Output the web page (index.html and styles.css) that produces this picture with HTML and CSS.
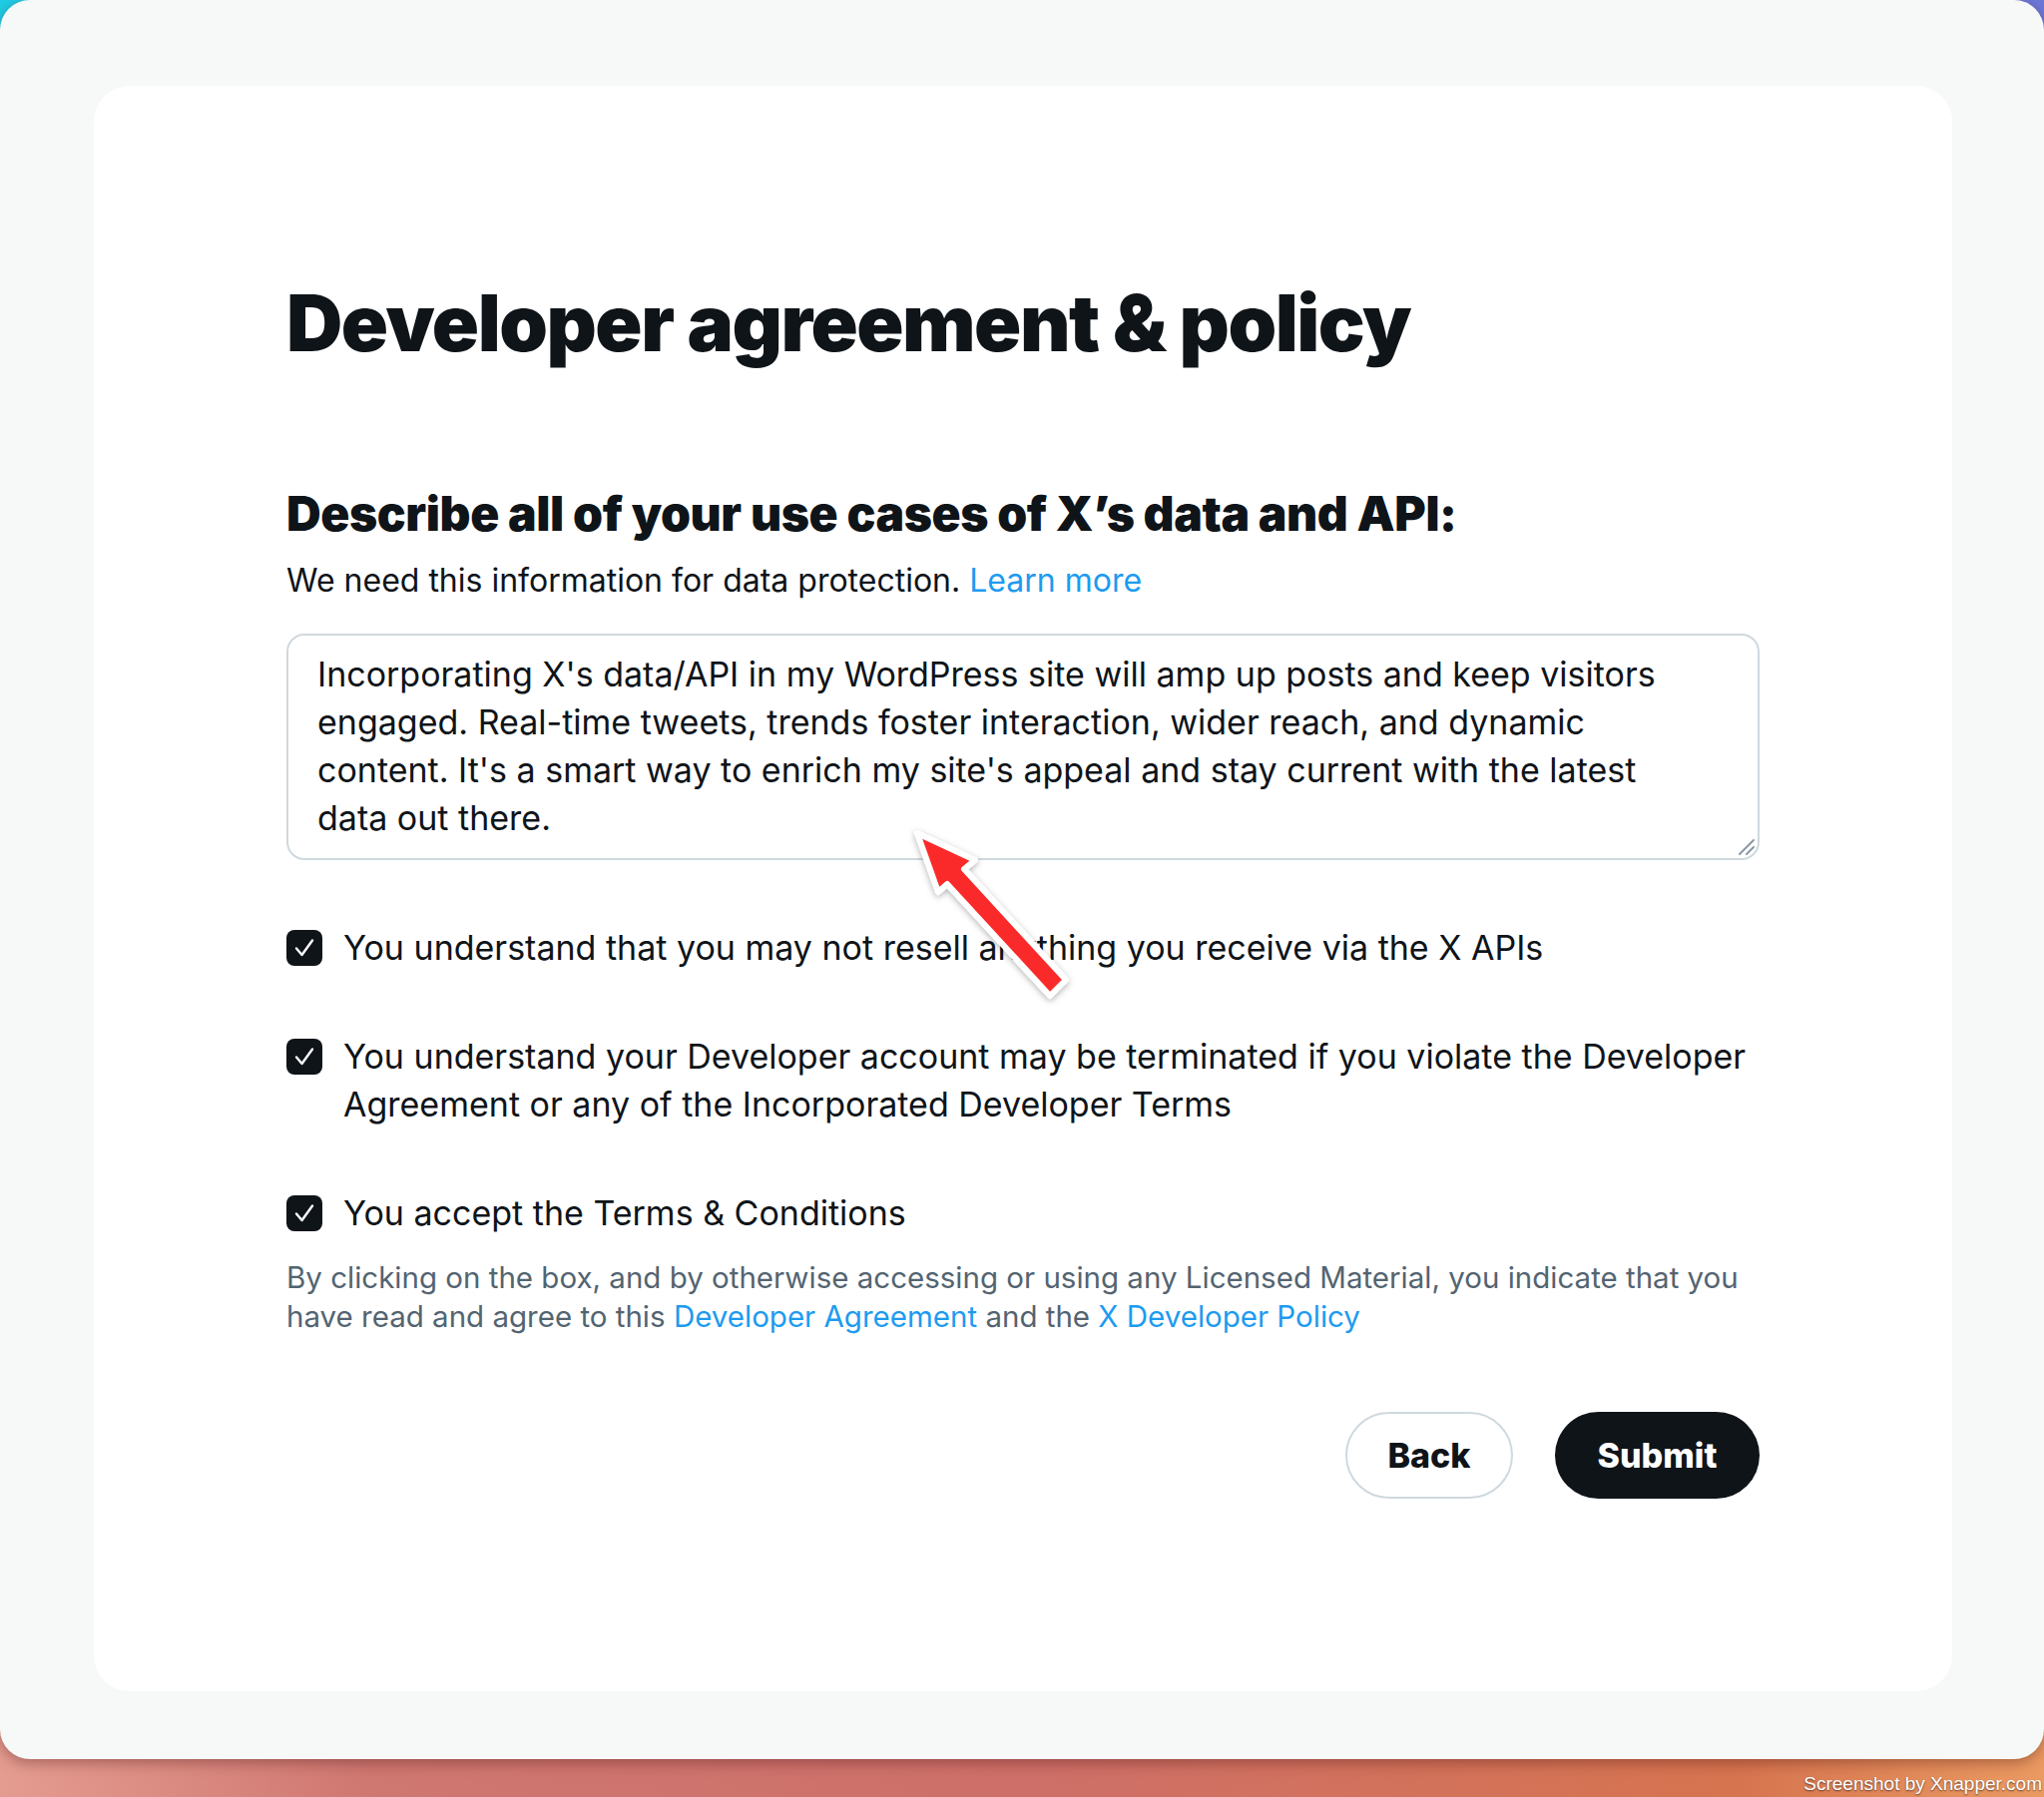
FILE: index.html
```html
<!DOCTYPE html>
<html lang="en">
<head>
<meta charset="utf-8">
<title>Developer agreement &amp; policy</title>
<link rel="stylesheet" href="styles.css">
</head>
<body>
<div class="window">
  <div class="card">
    <h1 class="title">Developer agreement &amp; policy</h1>
    <h2 class="subtitle">Describe all of your use cases of X’s data and API:</h2>
    <p class="hint">We need this information for data protection. <a class="link" href="#">Learn more</a></p>
    <div class="textarea">
      <p class="ta-text">Incorporating X's data/API in my WordPress site will amp up posts and keep visitors engaged. Real-time tweets, trends foster interaction, wider reach, and dynamic content. It's a smart way to enrich my site's appeal and stay current with the latest data out there.</p>
      <svg class="grip" width="20" height="20" viewBox="0 0 20 20"><path d="M4 18 L18 4 M11 18 L18 11" stroke="#8b98a5" stroke-width="2" fill="none" stroke-linecap="round"/></svg>
    </div>
    <div class="check-row first">
      <span class="box"><svg width="36" height="36" viewBox="0 0 36 36"><path d="M10 18.5 L15.5 25 L26 10.5" stroke="#fff" stroke-width="2.4" fill="none" stroke-linecap="round" stroke-linejoin="round"/></svg></span>
      <span class="label">You understand that you may not resell anything you receive via the X APIs</span>
    </div>
    <div class="check-row">
      <span class="box"><svg width="36" height="36" viewBox="0 0 36 36"><path d="M10 18.5 L15.5 25 L26 10.5" stroke="#fff" stroke-width="2.4" fill="none" stroke-linecap="round" stroke-linejoin="round"/></svg></span>
      <span class="label">You understand your Developer account may be terminated if you violate the Developer Agreement or any of the Incorporated Developer Terms</span>
    </div>
    <div class="check-row">
      <span class="box"><svg width="36" height="36" viewBox="0 0 36 36"><path d="M10 18.5 L15.5 25 L26 10.5" stroke="#fff" stroke-width="2.4" fill="none" stroke-linecap="round" stroke-linejoin="round"/></svg></span>
      <span class="label">You accept the Terms &amp; Conditions</span>
    </div>
    <p class="legal">By clicking on the box, and by otherwise accessing or using any Licensed Material, you indicate that you have read and agree to this <a class="link" href="#">Developer Agreement</a> and the <a class="link" href="#">X Developer Policy</a></p>
    <div class="actions">
      <button class="btn btn-back">Back</button>
      <button class="btn btn-submit">Submit</button>
    </div>
  </div>
</div>
<div class="watermark">Screenshot by Xnapper.com</div>
<svg class="arrow" width="2048" height="1801" viewBox="0 0 2048 1801">
  <defs>
    <filter id="sh" x="-20%" y="-20%" width="140%" height="140%">
      <feDropShadow dx="0" dy="2" stdDeviation="3" flood-color="#000" flood-opacity="0.3"/>
    </filter>
  </defs>
  <polygon filter="url(#sh)" points="919,835 977,862 966,871 1068,982 1052,998 949,886 940,894" fill="#fb2a2a" stroke="#fff" stroke-width="6" stroke-linejoin="round"/>
</svg>
</body>
</html>
```

FILE: styles.css
```css
* { box-sizing: border-box; }
html, body { margin: 0; padding: 0; }
body {
  width: 2048px;
  height: 1801px;
  position: relative;
  overflow: hidden;
  font-family: "Inter", "Noto Sans", sans-serif;
  color: #0f1419;
  background:
    linear-gradient(to right, #1fcde6 0%, #5b8fe0 60%, #6e78d8 100%) top / 100% 60px no-repeat,
    linear-gradient(to right, #e59c90 0%, #cf7771 18%, #ce6f69 50%, #d6744f 85%, #eb9a62 100%);
}
.window {
  width: 2048px;
  height: 1763px;
  background: #f7f9f9;
  border-radius: 30px;
  padding: 86px 92px 0 94px;
  box-shadow: 0 4px 14px rgba(60, 10, 10, 0.35);
}
.card {
  background: #fff;
  border-radius: 36px;
  height: 1609px;
  padding: 191px 193px 0 193px;
}
.title {
  margin: 0;
  font-size: 78px;
  line-height: 94px;
  font-weight: 900;
  letter-spacing: -1.5px;
}
.subtitle {
  margin: 116px 0 0;
  font-size: 48px;
  line-height: 56px;
  font-weight: 900;
  letter-spacing: -0.4px;
}
.hint {
  margin: 15px 0 0;
  font-size: 32px;
  line-height: 48px;
}
.link { color: #1d9bf0; text-decoration: none; }
.textarea {
  position: relative;
  margin-top: 29px;
  height: 227px;
  border: 2px solid #cfd9de;
  border-radius: 18px;
  padding: 15px 73px 0 29px;
}
.ta-text {
  margin: 0;
  font-size: 34px;
  line-height: 48px;
}
.grip { position: absolute; right: 2px; bottom: 2px; }
.check-row {
  display: flex;
  align-items: flex-start;
  gap: 21px;
  margin-top: 61px;
}
.check-row.first { margin-top: 64px; }
.box {
  flex: none;
  width: 36px;
  height: 36px;
  margin-top: 6px;
  border-radius: 8px;
  background: #0f1419;
  display: flex;
}
.label {
  font-size: 34px;
  line-height: 48px;
}
.legal {
  margin: 21px 0 0;
  font-size: 29.5px;
  line-height: 39px;
  color: #536471;
}
.legal .link { color: #1d9bf0; }
.actions {
  margin-top: 76px;
  display: flex;
  justify-content: flex-end;
  gap: 42px;
}
.btn {
  height: 87px;
  border-radius: 44px;
  font-family: "Inter", "Noto Sans", sans-serif;
  font-weight: 800;
  font-size: 34px;
  padding: 0;
}
.btn-back {
  width: 168px;
  background: #fff;
  color: #0f1419;
  border: 2px solid #cfd9de;
}
.btn-submit {
  width: 205px;
  background: #0f1419;
  color: #fff;
  border: none;
}
.watermark {
  position: absolute;
  right: 2px;
  bottom: 1px;
  font-family: "Liberation Sans", Arial, sans-serif;
  font-size: 19px;
  line-height: 24px;
  color: #fff;
  text-shadow: 0 1px 2px rgba(0,0,0,0.6);
}
.arrow {
  position: absolute;
  left: 0;
  top: 0;
  pointer-events: none;
}
```
